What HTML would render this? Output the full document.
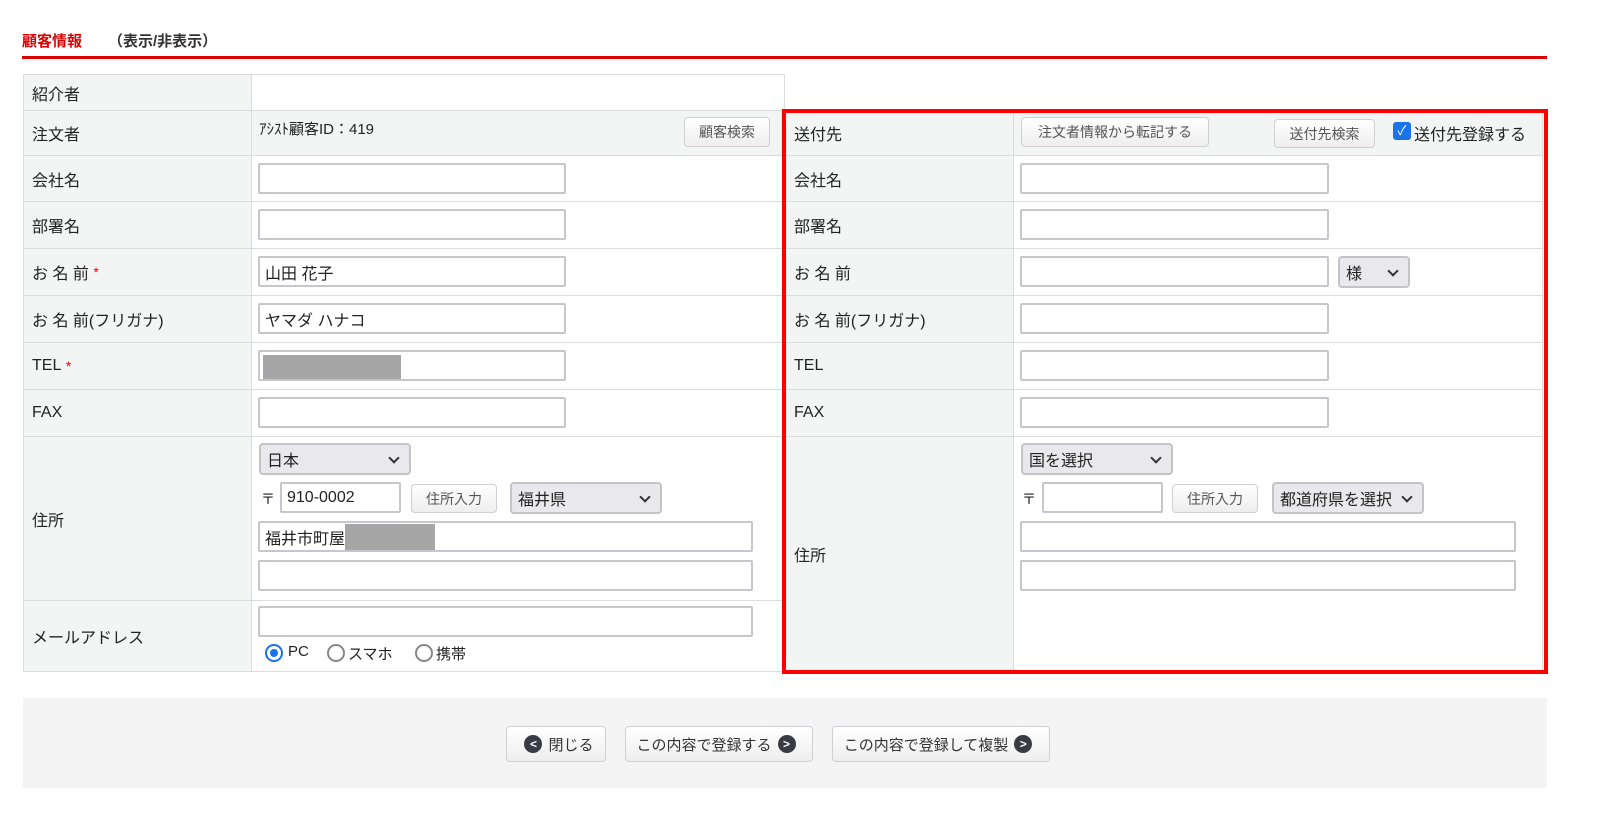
<!DOCTYPE html>
<html><head><meta charset="utf-8"><style>
*{box-sizing:border-box;margin:0;padding:0}
body{width:1600px;height:827px;background:#fff;position:relative;overflow:hidden;font-family:"Liberation Sans","Noto Sans CJK JP",sans-serif;font-size:16px;color:#222}
div,span{position:absolute}
.lb{background:#f3f4f4;border:1px solid #dcdcdc;padding-left:8px;display:flex;align-items:center}
.vc{background:#fff;border:1px solid #dcdcdc}
.in{background:#fff;border:2px solid #c6c6cc;border-radius:2px;height:31px;padding-left:5px;display:flex;align-items:center;font-size:16px}
.sel{background:#e9e9ed;border:2px solid #c3c3c8;border-radius:4px;height:32px;padding-left:6px;display:flex;align-items:center;font-size:16px}
.sel:after{content:"";position:absolute;right:11px;top:9px;width:6px;height:6px;border-right:2px solid #333;border-bottom:2px solid #333;transform:rotate(45deg)}
.btn{background:linear-gradient(#fff,#eee);border:1px solid #cfcfd4;border-radius:4px;display:flex;align-items:center;justify-content:center;font-size:14px;color:#555}
.req{color:#e00;font-size:14px}
.ic{position:static;display:inline-block;width:18px;height:18px;border-radius:50%;background:#3b3b45;color:#fff;font-size:12px;line-height:18px;text-align:center;font-weight:bold;margin:0 6px}
.fb{position:absolute;left:0;right:0;height:1px}
</style></head><body>
<div style="left:22px;top:30px;font-size:15px;font-weight:bold;color:#d00">顧客情報</div>
<div style="left:108px;top:30px;font-size:15px;font-weight:bold;color:#333">（表示/非表示）</div>
<div style="left:22px;top:56px;width:1525px;height:3px;background:#d00"></div>

<!-- left table -->
<div class="lb" style="left:23px;top:74px;width:229px;height:37px">紹介者</div>
<div class="vc" style="left:251px;top:74px;width:534px;height:37px"></div>
<div class="lb" style="left:23px;top:110px;width:229px;height:46px">注文者</div>
<div class="vc" style="left:251px;top:110px;width:534px;height:46px;background:#f3f4f4"></div>
<div style="left:259px;top:118px;font-size:15px">ｱｼｽﾄ顧客ID：419</div>
<div class="btn" style="left:684px;top:117px;width:86px;height:30px">顧客検索</div>

<div class="lb" style="left:23px;top:155px;width:229px;height:47px">会社名</div>
<div class="vc" style="left:251px;top:155px;width:534px;height:47px"></div>
<div class="in" style="left:258px;top:163px;width:308px"></div>
<div class="lb" style="left:23px;top:201px;width:229px;height:48px">部署名</div>
<div class="vc" style="left:251px;top:201px;width:534px;height:48px"></div>
<div class="in" style="left:258px;top:209px;width:308px"></div>
<div class="lb" style="left:23px;top:248px;width:229px;height:48px">お 名 前&nbsp;<span class="req" style="position:static">*</span></div>
<div class="vc" style="left:251px;top:248px;width:534px;height:48px"></div>
<div class="in" style="left:258px;top:256px;width:308px">山田 花子</div>
<div class="lb" style="left:23px;top:295px;width:229px;height:48px">お 名 前(フリガナ)</div>
<div class="vc" style="left:251px;top:295px;width:534px;height:48px"></div>
<div class="in" style="left:258px;top:303px;width:308px">ヤマダ ハナコ</div>
<div class="lb" style="left:23px;top:342px;width:229px;height:48px">TEL&nbsp;<span class="req" style="position:static">*</span></div>
<div class="vc" style="left:251px;top:342px;width:534px;height:48px"></div>
<div class="in" style="left:258px;top:350px;width:308px"><span style="left:3px;top:3px;width:138px;height:24px;background:#a6a6a6"></span></div>
<div class="lb" style="left:23px;top:389px;width:229px;height:48px">FAX</div>
<div class="vc" style="left:251px;top:389px;width:534px;height:48px"></div>
<div class="in" style="left:258px;top:397px;width:308px"></div>
<div class="lb" style="left:23px;top:436px;width:229px;height:165px">住所</div>
<div class="vc" style="left:251px;top:436px;width:534px;height:165px"></div>
<div class="sel" style="left:259px;top:443px;width:152px">日本</div>
<div style="left:261px;top:489px;font-size:14px">〒</div>
<div class="in" style="left:280px;top:482px;width:121px">910-0002</div>
<div class="btn" style="left:411px;top:484px;width:86px;height:29px">住所入力</div>
<div class="sel" style="left:510px;top:482px;width:152px">福井県</div>
<div class="in" style="left:258px;top:521px;width:495px">福井市町屋<span style="position:static;display:inline-block;width:90px;height:26px;background:#a6a6a6"></span></div>
<div class="in" style="left:258px;top:560px;width:495px"></div>
<div class="lb" style="left:23px;top:600px;width:229px;height:72px">メールアドレス</div>
<div class="vc" style="left:251px;top:600px;width:534px;height:72px"></div>
<div class="in" style="left:258px;top:606px;width:495px"></div>
<div style="left:265px;top:644px;width:18px;height:18px;border:2px solid #1a73e8;border-radius:50%"><span style="left:3px;top:3px;width:8px;height:8px;border-radius:50%;background:#1a73e8"></span></div>
<div style="left:288px;top:643px;font-size:15px">PC</div>
<div style="left:327px;top:644px;width:18px;height:18px;border:2px solid #888;border-radius:50%"></div>
<div style="left:348px;top:643px;font-size:15px">スマホ</div>
<div style="left:415px;top:644px;width:18px;height:18px;border:2px solid #888;border-radius:50%"></div>
<div style="left:436px;top:643px;font-size:15px">携帯</div>

<!-- right table -->
<div class="lb" style="left:785px;top:110px;width:229px;height:46px">送付先</div>
<div class="vc" style="left:1013px;top:110px;width:530px;height:46px;background:#f3f4f4"></div>
<div class="btn" style="left:1021px;top:117px;width:188px;height:30px">注文者情報から転記する</div>
<div class="btn" style="left:1274px;top:119px;width:101px;height:29px">送付先検索</div>
<div style="left:1393px;top:122px;width:18px;height:18px;background:#1a73e8;border-radius:3px;color:#fff;font-size:13px;line-height:18px;text-align:center">✓</div>
<div style="left:1414px;top:121px;font-size:16px">送付先登録する</div>
<div class="lb" style="left:785px;top:155px;width:229px;height:47px">会社名</div>
<div class="vc" style="left:1013px;top:155px;width:530px;height:47px"></div>
<div class="in" style="left:1020px;top:163px;width:309px"></div>
<div class="lb" style="left:785px;top:201px;width:229px;height:48px">部署名</div>
<div class="vc" style="left:1013px;top:201px;width:530px;height:48px"></div>
<div class="in" style="left:1020px;top:209px;width:309px"></div>
<div class="lb" style="left:785px;top:248px;width:229px;height:48px">お 名 前</div>
<div class="vc" style="left:1013px;top:248px;width:530px;height:48px"></div>
<div class="in" style="left:1020px;top:256px;width:309px"></div>
<div class="sel" style="left:1338px;top:256px;width:72px">様</div>
<div class="lb" style="left:785px;top:295px;width:229px;height:48px">お 名 前(フリガナ)</div>
<div class="vc" style="left:1013px;top:295px;width:530px;height:48px"></div>
<div class="in" style="left:1020px;top:303px;width:309px"></div>
<div class="lb" style="left:785px;top:342px;width:229px;height:48px">TEL</div>
<div class="vc" style="left:1013px;top:342px;width:530px;height:48px"></div>
<div class="in" style="left:1020px;top:350px;width:309px"></div>
<div class="lb" style="left:785px;top:389px;width:229px;height:48px">FAX</div>
<div class="vc" style="left:1013px;top:389px;width:530px;height:48px"></div>
<div class="in" style="left:1020px;top:397px;width:309px"></div>
<div class="lb" style="left:785px;top:436px;width:229px;height:236px">住所</div>
<div class="vc" style="left:1013px;top:436px;width:530px;height:236px"></div>
<div class="sel" style="left:1021px;top:443px;width:152px">国を選択</div>
<div style="left:1022px;top:489px;font-size:14px">〒</div>
<div class="in" style="left:1042px;top:482px;width:121px"></div>
<div class="btn" style="left:1172px;top:484px;width:86px;height:29px">住所入力</div>
<div class="sel" style="left:1272px;top:482px;width:152px">都道府県を選択</div>
<div class="in" style="left:1020px;top:521px;width:496px"></div>
<div class="in" style="left:1020px;top:560px;width:496px"></div>

<div style="left:782px;top:109px;width:766px;height:565px;border:4px solid #f00"></div>

<!-- footer -->
<div style="left:23px;top:698px;width:1524px;height:90px;background:#f4f4f4"></div>
<div class="btn" style="left:506px;top:726px;width:100px;height:36px;color:#333;font-size:15px"><span class="ic">&lt;</span>閉じる</div>
<div class="btn" style="left:625px;top:726px;width:188px;height:36px;color:#333;font-size:15px">この内容で登録する<span class="ic">&gt;</span></div>
<div class="btn" style="left:832px;top:726px;width:218px;height:36px;color:#333;font-size:15px">この内容で登録して複製<span class="ic">&gt;</span></div>
</body></html>
